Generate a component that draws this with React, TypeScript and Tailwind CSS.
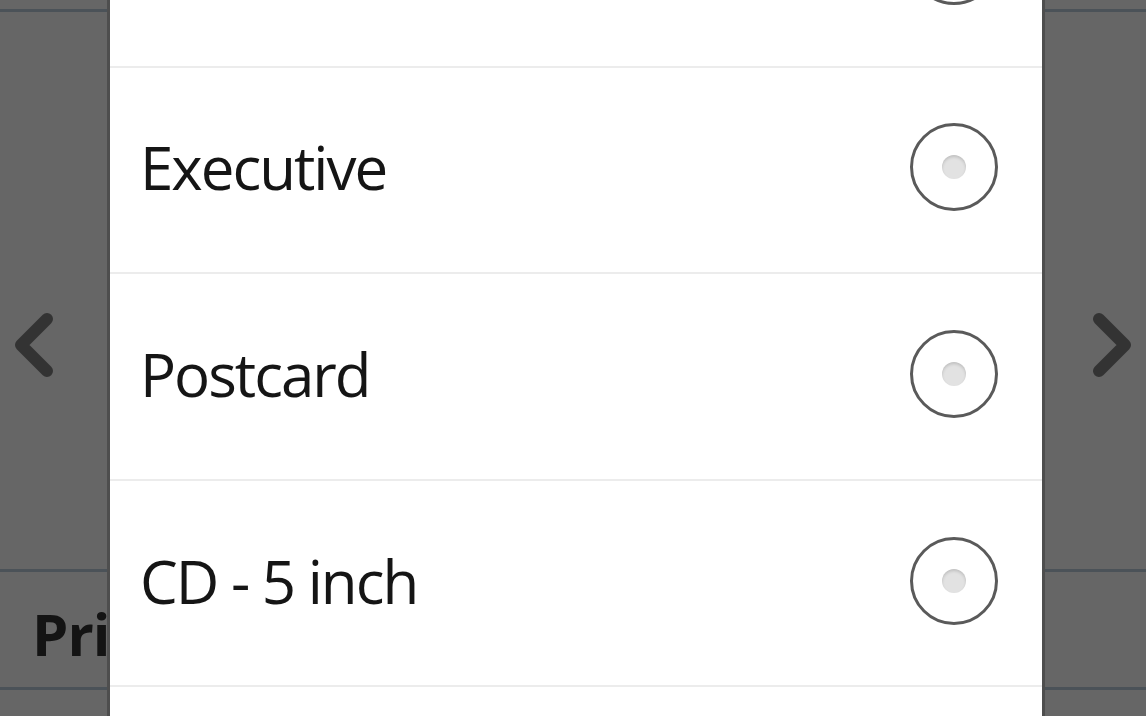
const options = ["Letter", "Executive", "Postcard", "CD - 5 inch", "Photo"]

function Radio() {
  return (
    <div className="-mt-[5px] flex h-[88px] w-[88px] items-center justify-center rounded-full border-[3px] border-[#5a5a5a] bg-white">
      <div className="h-[24px] w-[24px] rounded-full bg-[#e2e2e2] shadow-[inset_0_2px_3px_rgba(0,0,0,0.15)]" />
    </div>
  )
}

export default function App() {
  return (
    <div
      className="relative h-[716px] w-[1146px] overflow-hidden bg-[#666666]"
      style={{ fontFamily: '"Open Sans", "Noto Sans", sans-serif' }}
    >
      {/* page behind the dialog */}
      <div className="flex h-full flex-col">
        <div className="mt-[9px] h-[3px] bg-[#4b5258]" />
        <div className="flex flex-1 items-start justify-between px-[13px] pt-[301px]">
          <svg width="42" height="64" viewBox="0 0 42 64" fill="none">
            <path d="M34 6 L8 32 L34 58" stroke="#333333" strokeWidth="12" strokeLinecap="round" strokeLinejoin="round" />
          </svg>
          <svg width="42" height="64" viewBox="0 0 42 64" fill="none">
            <path d="M8 6 L34 32 L8 58" stroke="#333333" strokeWidth="12" strokeLinecap="round" strokeLinejoin="round" />
          </svg>
        </div>
        <div className="h-[3px] bg-[#4b5258]" />
        <div className="flex h-[115px] items-center pl-[32px] pt-[8px] text-[58px] font-bold tracking-[-1px] text-[#141414]">
          Printer
        </div>
        <div className="h-[3px] bg-[#4b5258]" />
        <div className="h-[26px] flex-none" />
      </div>

      {/* dialog */}
      <div className="absolute left-[107px] top-0 h-full w-[938px] border-x-[3px] border-x-[#4e4e4e] bg-white">
        <div className="-mt-[139px] flex flex-col">
          {options.map((o) => (
            <div
              key={o}
              className="flex h-[206.6px] items-center justify-between border-b-2 border-[#ececec] pl-[30px] pr-[44px] text-[60px] tracking-[-2px] text-[#151515]"
            >
              <span className="-mt-[5px]">{o}</span>
              <Radio />
            </div>
          ))}
        </div>
      </div>
    </div>
  )
}
